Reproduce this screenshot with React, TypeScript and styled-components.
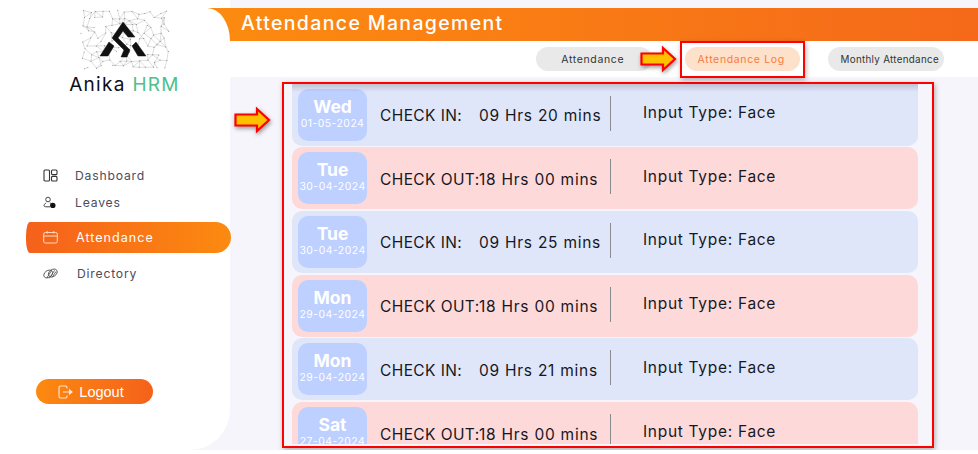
import React from "react";
import styled, { createGlobalStyle } from "styled-components";

const Global = createGlobalStyle`
  html, body { margin: 0; padding: 0; background: #fff; }
  body { font-family: Inter, "Open Sans", sans-serif; overflow: hidden; }
  * { box-sizing: border-box; }
`;

const Shell = styled.div`
  position: relative;
  display: grid;
  grid-template-columns: 230px 1fr;
  width: 978px;
  height: 450px;
  background: #f5f5fb;
`;

const Rail = styled.div`
  padding-top: 8px;
  background: linear-gradient(#fff 8px, #fb8a10 8px, #fb8a10 41px, #f5f5fb 41px);
`;

const Sidebar = styled.aside`
  display: flex;
  flex-direction: column;
  width: 230px;
  height: 442px;
  background: #fff;
  border-radius: 0 23px 40px 0 / 0 33px 40px 0;
`;

const Brand = styled.div`
  display: flex;
  flex-direction: column;
  align-items: center;
  height: 153.5px;
  padding-left: 19px;
`;

const BrandName = styled.div`
  margin-top: 3px;
  font-size: 19px;
  line-height: 20px;
  letter-spacing: 1.3px;
  color: #0e0e16;
  white-space: nowrap;
`;

const BrandAccent = styled.span`
  color: #4dc08c;
`;

const Nav = styled.nav`
  display: flex;
  flex-direction: column;
`;

const NavItem = styled.div<{ $active?: boolean; $gap?: number }>`
  display: flex;
  align-items: center;
  gap: ${(p) => p.$gap ?? 17}px;
  height: ${(p) => (p.$active ? "31px" : "27px")};
  margin: ${(p) => (p.$active ? "6.5px 0 6.5px 26px" : "0 0 0 26px")};
  width: 205px;
  padding-left: 17px;
  font-size: ${(p) => (p.$active ? "12.6px" : "12.2px")};
  letter-spacing: ${(p) => (p.$active ? "1px" : "0.8px")};
  color: ${(p) => (p.$active ? "#fff" : "#4c4c5c")};
  border-radius: ${(p) => (p.$active ? "4px 16px 16px 4px / 14px 16px 16px 14px" : "0")};
  background: ${(p) => (p.$active ? "linear-gradient(90deg, #f5611b, #fc8a10)" : "transparent")};
  svg { flex: none; width: 15px; height: 15px; }
`;

const Logout = styled.button`
  display: flex;
  align-items: center;
  justify-content: center;
  gap: 6px;
  width: 117px;
  height: 25px;
  margin: auto 0 46px 36px;
  padding: 0 7px 0 0;
  border: 0;
  border-radius: 13px;
  color: #fff;
  font-family: "Liberation Sans", Arial, sans-serif;
  font-size: 14.5px;
  background: linear-gradient(90deg, #fc8a10, #f5611b);
`;

const Main = styled.main`
  display: flex;
  flex-direction: column;
  min-width: 0;
`;

const TopBar = styled.header`
  display: flex;
  align-items: center;
  height: 33px;
  margin-top: 8px;
  padding: 0 0 3px 11px;
  color: #fff;
  font-size: 19.5px;
  font-weight: 500;
  letter-spacing: 1.35px;
  background: linear-gradient(90deg, #fc8a10, #f5691a);
`;

const Tabs = styled.div`
  display: flex;
  align-items: center;
  gap: 33px;
  height: 36px;
  padding: 0 0 0 306px;
  background: #fff;
`;

const Tab = styled.div<{ $active?: boolean }>`
  display: flex;
  align-items: center;
  justify-content: center;
  flex: none;
  width: 115.5px;
  height: 24px;
  border-radius: 12px;
  padding-right: 2px;
  font-size: 10.5px;
  letter-spacing: 0.65px;
  white-space: nowrap;
  background: ${(p) => (p.$active ? "#fde1ca" : "#e9e9e9")};
  color: ${(p) => (p.$active ? "#fa7a3a" : "#333")};
  &:last-child {
    margin-left: -5px;
    padding: 0 0 0 8px;
    font-size: 9.8px;
    letter-spacing: 0.3px;
  }
`;

const Content = styled.section`
  flex: 1;
  padding: 6.6px 60px 6px 62px;
  min-height: 0;
`;

const List = styled.div`
  position: relative;
  display: flex;
  flex-direction: column;
  gap: 1.7px;
  height: 360.4px;
  overflow: hidden;
  &::before {
    content: "";
    position: absolute;
    inset: 0 0 auto 0;
    height: 8px;
    z-index: 1;
    background: linear-gradient(rgba(110, 110, 120, 0.3), rgba(120, 120, 130, 0));
  }
`;

const Row = styled.article<{ $kind: "in" | "out" }>`
  display: flex;
  align-items: center;
  flex: none;
  height: 62px;
  padding-left: 6px;
  border-radius: 10px;
  background: ${(p) => (p.$kind === "in" ? "#e0e6fa" : "#fed9d9")};
  &:first-child { border-radius: 0 0 10px 10px; }
`;

const DateTile = styled.div`
  display: flex;
  flex-direction: column;
  align-items: center;
  flex: none;
  width: 69px;
  height: 52px;
  padding-top: 7px;
  border-radius: 10px;
  color: #fff;
  background: #bdd0ff;
  white-space: nowrap;
`;

const Day = styled.div`
  font-size: 17.5px;
  line-height: 21px;
  font-weight: 700;
`;

const DateText = styled.div`
  font-size: 10.4px;
  line-height: 13px;
  letter-spacing: 0.5px;
`;

const Check = styled.div`
  display: flex;
  align-items: center;
  width: 231px;
  height: 35px;
  margin: 0 0 3px 13px;
  padding-top: 5px;
  border-right: 1px solid #8a8a90;
  color: #17171d;
  font-size: 15.5px;
  letter-spacing: 0.75px;
  white-space: nowrap;
`;

const CheckLabel = styled.span`
  width: 99px;
  flex: none;
  letter-spacing: 0.4px;
`;

const InputType = styled.div`
  margin-left: 32px;
  padding-bottom: 4px;
  color: #17171d;
  font-size: 15.5px;
  letter-spacing: 0.7px;
  white-space: nowrap;
`;

const Frame = styled.div<{ $x: number; $y: number; $w: number; $h: number }>`
  position: absolute;
  left: ${(p) => p.$x}px;
  top: ${(p) => p.$y}px;
  width: ${(p) => p.$w}px;
  height: ${(p) => p.$h}px;
  border: 2px solid #f00;
  box-shadow: 1px 2px 5px rgba(0, 0, 0, 0.3);
  pointer-events: none;
`;

const ArrowBox = styled.svg<{ $x: number; $y: number }>`
  position: absolute;
  left: ${(p) => p.$x}px;
  top: ${(p) => p.$y}px;
  width: 37px;
  height: 26px;
  overflow: visible;
  filter: drop-shadow(1px 2px 2px rgba(0, 0, 0, 0.4));
`;

const Arrow = ({ x, y }: { x: number; y: number }) => (
  <ArrowBox $x={x} $y={y} viewBox="0 0 37 26">
    <path d="M1.5 7.5H23V2L35 13L23 24V18.5H1.5Z" fill="#ffc000" stroke="#f00" strokeWidth="2.2" />
  </ArrowBox>
);

function buildMesh() {
  let seed = 4127;
  const rnd = () => {
    seed = (seed * 1103515245 + 12345) % 2147483648;
    return seed / 2147483648;
  };
  const pts: [number, number][] = [];
  for (let gx = 0; gx < 13; gx++) {
    for (let gy = 0; gy < 9; gy++) {
      pts.push([2 + gx * 7 + rnd() * 5, 2 + gy * 6.8 + rnd() * 5]);
    }
  }
  const lines: [number, number, number, number][] = [];
  pts.forEach((a, i) => {
    pts.forEach((b, j) => {
      if (j <= i) return;
      const d = Math.hypot(a[0] - b[0], a[1] - b[1]);
      if (d < 9.5 && rnd() > 0.3) lines.push([a[0], a[1], b[0], b[1]]);
    });
  });
  return { pts, lines };
}
const mesh = buildMesh();

const LogoSvg = styled.svg`
  display: block;
  width: 93px;
  height: 64px;
`;

const Logo = () => (
  <LogoSvg viewBox="0 0 93 64">
    <g stroke="#b6b6b6" strokeWidth="0.45" fill="none">
      {mesh.lines.map((l, i) => (
        <line key={i} x1={l[0]} y1={l[1]} x2={l[2]} y2={l[3]} />
      ))}
    </g>
    <g fill="#808080">
      {mesh.pts.map((p, i) => (
        <circle key={i} cx={p[0]} cy={p[1]} r="0.5" />
      ))}
    </g>
    <g transform="translate(-77 -8)" fill="#111" stroke="#111" strokeWidth="0.5" strokeLinejoin="round">
      <path d="M122 22L134 37H127L122 31L117 38L129 50L126 57H120L123 50L111 38Z" />
      <path d="M108 42L113 46L107 56H99Z" />
      <path d="M135 42L145 56H137L131 46Z" />
    </g>
  </LogoSvg>
);

const DashboardIcon = () => (
  <svg viewBox="0 0 15 15" fill="none" stroke="#333" strokeWidth="1.1">
    <rect x="1" y="2" width="5.5" height="11" rx="1" />
    <rect x="8.5" y="2" width="5.5" height="4.6" rx="1" />
    <rect x="8.5" y="8.4" width="5.5" height="4.6" rx="1" />
  </svg>
);

const LeavesIcon = () => (
  <svg viewBox="0 0 15 15" fill="none" stroke="#444" strokeWidth="1">
    <circle cx="5" cy="4.5" r="2.3" />
    <path d="M3.2 8C1.8 8.6 1 9.6 1 10.6C1 11.4 1.8 11.8 3 11.8H7" />
    <path d="M6.8 8C7.4 8.1 8 8.3 8.4 8.6" />
    <circle cx="9.8" cy="10.4" r="2.7" fill="#111" stroke="none" />
  </svg>
);

const CalendarIcon = () => (
  <svg viewBox="0 0 15 15" fill="none" stroke="#ffd9c2" strokeWidth="1">
    <rect x="0.7" y="2.5" width="13.6" height="10.5" rx="1.6" />
    <path d="M0.7 6H14.3M4.2 1V3.6M10.8 1V3.6" />
  </svg>
);

const DirectoryIcon = () => (
  <svg viewBox="0 0 15 15" fill="none" stroke="#555" strokeWidth="0.9">
    <ellipse cx="5.2" cy="8" rx="4.8" ry="3.4" transform="rotate(-35 5.2 8)" />
    <ellipse cx="9.8" cy="7" rx="4.8" ry="3.4" transform="rotate(-35 9.8 7)" />
    <path d="M3.8 12L8.8 4.2M6.4 12.2L11.6 4.4M9 11.5L13 5.5" />
  </svg>
);

const LogoutIcon = () => (
  <svg width="15" height="14" viewBox="0 0 15 14" fill="none" stroke="#ffe3d0" strokeWidth="1.1">
    <path d="M9 3.5V2.5A1.5 1.5 0 0 0 7.5 1H2.5A1.5 1.5 0 0 0 1 2.5V11.5A1.5 1.5 0 0 0 2.5 13H7.5A1.5 1.5 0 0 0 9 11.5V10.5" />
    <path d="M5 7H12" />
    <path d="M11.5 5L14 7L11.5 9Z" fill="#ffe3d0" />
  </svg>
);

type Entry = { kind: "in" | "out"; day: string; date: string; time: string };

const entries: Entry[] = [
  { kind: "in", day: "Wed", date: "01-05-2024", time: "09 Hrs 20 mins" },
  { kind: "out", day: "Tue", date: "30-04-2024", time: "18 Hrs 00 mins" },
  { kind: "in", day: "Tue", date: "30-04-2024", time: "09 Hrs 25 mins" },
  { kind: "out", day: "Mon", date: "29-04-2024", time: "18 Hrs 00 mins" },
  { kind: "in", day: "Mon", date: "29-04-2024", time: "09 Hrs 21 mins" },
  { kind: "out", day: "Sat", date: "27-04-2024", time: "18 Hrs 00 mins" },
];

export default function App() {
  return (
    <>
      <Global />
      <Shell>
        <Rail>
          <Sidebar>
            <Brand>
              <Logo />
              <BrandName>
                Anika <BrandAccent>HRM</BrandAccent>
              </BrandName>
            </Brand>
            <Nav>
              <NavItem><DashboardIcon />Dashboard</NavItem>
              <NavItem><LeavesIcon />Leaves</NavItem>
              <NavItem $active $gap={18}><CalendarIcon />Attendance</NavItem>
              <NavItem $gap={19}><DirectoryIcon />Directory</NavItem>
            </Nav>
            <Logout><LogoutIcon />Logout</Logout>
          </Sidebar>
        </Rail>
        <Main>
          <TopBar>Attendance Management</TopBar>
          <Tabs>
            <Tab>Attendance</Tab>
            <Tab $active>Attendance Log</Tab>
            <Tab>Monthly Attendance</Tab>
          </Tabs>
          <Content>
            <List>
              {entries.map((e, i) => (
                <Row key={i} $kind={e.kind}>
                  <DateTile>
                    <Day>{e.day}</Day>
                    <DateText>{e.date}</DateText>
                  </DateTile>
                  <Check>
                    <CheckLabel>{e.kind === "in" ? "CHECK IN:" : "CHECK OUT:"}</CheckLabel>
                    {e.time}
                  </Check>
                  <InputType>Input Type: Face</InputType>
                </Row>
              ))}
            </List>
          </Content>
        </Main>
        <Frame $x={282} $y={82} $w={652} $h={366} />
        <Frame $x={680} $y={41} $w={125} $h={37} />
        <Arrow x={234} y={107} />
        <Arrow x={640} y={46} />
      </Shell>
    </>
  );
}
